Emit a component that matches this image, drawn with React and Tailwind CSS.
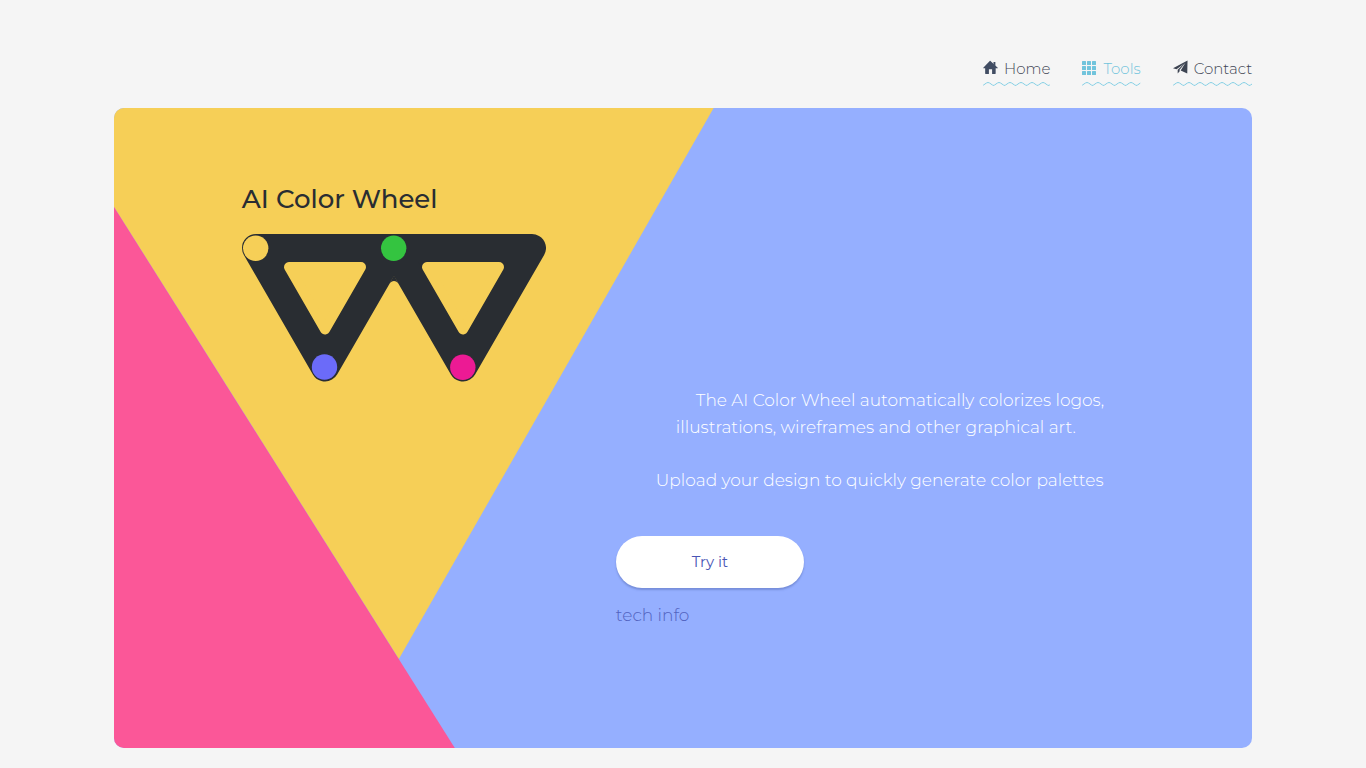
import React from "react";

const HomeIcon = () => (
  <svg viewBox="0 0 16 16" className="h-[15px] w-[15px] fill-[#414d63]" aria-hidden="true">
    <path d="M7.700.8 15.700 8.300c.3.3.1.600-.3.600H13.500v5.200c0 .6-.3.900-.9.900H9.700V9.900H6.300v5.100H3.200c-.6 0-.9-.3-.9-.9V8.900H.6c-.4 0-.5-.3-.3-.6L7.200 1c.3-.3.400-.3.500-.2z" />
    <path d="M11.200 2.200h2v4.200l-2-2z" />
  </svg>
);

const ToolsIcon = () => (
  <svg viewBox="0 0 15 15" className="h-[15px] w-[15px] fill-[#71c4dc]" aria-hidden="true">
    {[1, 6, 11].map((y) =>
      [0, 5, 10].map((x) => (
        <rect key={`${x}-${y}`} x={x} y={y} width="4" height="4" rx="0.5" />
      ))
    )}
  </svg>
);

const ContactIcon = () => (
  <svg viewBox="0 0 16 16" className="h-[15px] w-[15px] fill-[#3d4452]" aria-hidden="true">
    <path d="M15.500 0.500 0 8.700l3.800 1.100L12 3.800 5 10.300v4.200l2.300-2.800-.5-1L13.300 2.800 8.200 11.200l7 3.300z" />
  </svg>
);

const links = [
  { label: "Home", icon: HomeIcon, color: "text-[#414554]" },
  { label: "Tools", icon: ToolsIcon, color: "text-[#71c4dc]" },
  { label: "Contact", icon: ContactIcon, color: "text-[#414554]" },
];

const Wave = ({ id }) => (
  <svg className="block h-[6px] w-0 min-w-full" aria-hidden="true">
    <defs>
      <pattern id={id} width="11" height="6" patternUnits="userSpaceOnUse">
        <path
          d="M-1 4.500C1 4.500 3 1.500 5 1.500S9 4.500 11 4.500s1 0 1 0"
          fill="none"
          stroke="#84cfe4"
        />
      </pattern>
    </defs>
    <rect width="100%" height="6" fill={`url(#${id})`} />
  </svg>
);

const Nav = () => (
  <nav className="flex justify-end gap-8 pt-[58px] pb-[21px]">
    {links.map(({ label, icon: Icon, color }) => (
      <a key={label} href="#" className={color}>
        <span className="flex h-[23px] items-center gap-[6px] text-[15px] font-light">
          <span className="pb-[5px]">
            <Icon />
          </span>
          {label}
        </span>
        <Wave id={`wave-${label}`} />
      </a>
    ))}
  </nav>
);

// yellow and pink triangles behind the hero content
const Backdrop = () => (
  <svg
    viewBox="0 0 1139 640"
    preserveAspectRatio="none"
    className="absolute inset-0 h-full w-full"
    aria-hidden="true"
  >
    <path d="M0 0H600L285 551 0 99z" fill="#f6cf57" />
    <path d="M0 99 341 640H0z" fill="#fb5798" />
  </svg>
);

const Logo = () => (
  <svg viewBox="0 0 304 148" className="h-[148px] w-[304px]" aria-hidden="true">
    <path
      d="M14 14 83 133.500 152 14 221 133.500 290 14z"
      fill="#292d32"
      stroke="#292d32"
      strokeWidth="28"
      strokeLinejoin="round"
    />
    <path d="M152 41 147.700 49.500A5 5 0 0 1 156.300 49.500z" fill="#292d32" />
    <g fill="#f6cf57" stroke="#f6cf57" strokeWidth="10" strokeLinejoin="round">
      <path d="M47 33H119L83 95.500z" />
      <path d="M185 33H257L221 95.500z" />
    </g>
    <circle cx="13.700" cy="14.300" r="12.700" fill="#f6cf57" />
    <circle cx="151.700" cy="14.300" r="12.700" fill="#34c440" />
    <circle cx="82.500" cy="133" r="12.700" fill="#6b6bf9" />
    <circle cx="220.800" cy="133.300" r="12.700" fill="#ec1a94" />
  </svg>
);

const App = () => {
  return (
    <div className="min-h-screen bg-[#f5f5f5] pb-5 font-['Montserrat','Inter',sans-serif]">
      <div className="mx-auto w-5/6">
        <Nav />

        <main className="relative min-h-[640px] overflow-hidden rounded-[10px] bg-[#95afff]">
          <Backdrop />

          <div className="relative flex pl-32">
            <div className="w-[374px] shrink-0 pt-[74px]">
              <h1 className="pb-[18px] text-[26px] leading-[34px] font-medium text-[#292d32]">
                AI Color Wheel
              </h1>
              <Logo />
            </div>

            <div className="pt-[279px]">
              <div className="text-[17px] leading-[27px] font-light text-white">
                <p className="pl-20">
                  The AI Color Wheel automatically colorizes logos,
                </p>
                <p className="pb-[26px] pl-[60px]">
                  illustrations, wireframes and other graphical art.
                </p>
                <p className="pl-10">
                  Upload your design to quickly generate color palettes
                </p>
              </div>

              <button
                type="button"
                className="mt-[42px] block h-[52px] w-[188px] rounded-full bg-white text-[15px] font-normal text-[#4a55b5] shadow-[0_2px_2px_rgba(60,80,150,0.35)]"
              >
                Try it
              </button>
              <a
                href="#"
                className="mt-[14px] inline-block text-[17px] leading-[27px] font-light text-[#5263bf]"
              >
                tech info
              </a>
            </div>
          </div>
        </main>
      </div>
    </div>
  );
};

export default App;
